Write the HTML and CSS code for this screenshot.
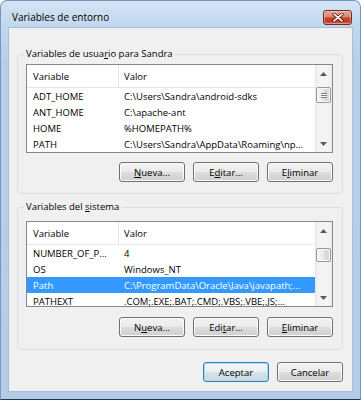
FILE: index.html
```html
<!DOCTYPE html>
<html lang="es">
<head>
<meta charset="utf-8">
<title>Variables de entorno</title>
<link rel="stylesheet" href="styles.css">
</head>
<body>
<div class="window">
  <div class="titlebar">
    <span class="title">Variables de entorno</span>
    <span class="close">
      <svg width="12" height="9" viewBox="0 0 12 9">
        <path d="M2 1.2 L10 7.8 M10 1.2 L2 7.8" stroke="#4a1810" stroke-width="3.2" stroke-linecap="round" fill="none"/>
        <path d="M2 1.2 L10 7.8 M10 1.2 L2 7.8" stroke="#ffffff" stroke-width="1.7" stroke-linecap="round" fill="none"/>
      </svg>
    </span>
  </div>
  <div class="client">
    <fieldset class="group group-user">
      <legend>Variables de usua<u>r</u>io para Sandra</legend>
      <div class="list list-user">
        <div class="list-main">
          <div class="row head"><span class="c1">Variable</span><span class="c2">Valor</span></div>
          <div class="row"><span class="c1">ADT_HOME</span><span class="c2">C:\Users\Sandra\android-sdks</span></div>
          <div class="row"><span class="c1">ANT_HOME</span><span class="c2">C:\apache-ant</span></div>
          <div class="row"><span class="c1">HOME</span><span class="c2">%HOMEPATH%</span></div>
          <div class="row"><span class="c1">PATH</span><span class="c2">C:\Users\Sandra\AppData\Roaming\np...</span></div>
        </div>
        <div class="vscroll">
          <div class="arrow"><svg width="7" height="4" viewBox="0 0 7 4"><path d="M0 4 L3.5 0 L7 4 Z" fill="#5a5a5a"/></svg></div>
          <div class="track"><div class="thumb thumb-user"><span class="grip"></span></div></div>
          <div class="arrow"><svg width="7" height="4" viewBox="0 0 7 4"><path d="M0 0 L7 0 L3.5 4 Z" fill="#5a5a5a"/></svg></div>
        </div>
      </div>
      <div class="btns">
        <button class="btn"><u>N</u>ueva...</button>
        <button class="btn">E<u>d</u>itar...</button>
        <button class="btn">E<u>l</u>iminar</button>
      </div>
    </fieldset>

    <fieldset class="group group-sys">
      <legend>Variables del <u>s</u>istema</legend>
      <div class="list list-sys">
        <div class="list-main">
          <div class="row head"><span class="c1">Variable</span><span class="c2">Valor</span></div>
          <div class="row"><span class="c1">NUMBER_OF_P...</span><span class="c2">4</span></div>
          <div class="row"><span class="c1">OS</span><span class="c2">Windows_NT</span></div>
          <div class="row selected"><span class="c1">Path</span><span class="c2">C:\ProgramData\Oracle\Java\javapath;...</span></div>
          <div class="row"><span class="c1">PATHEXT</span><span class="c2">.COM;.EXE;.BAT;.CMD;.VBS;.VBE;.JS;...</span></div>
        </div>
        <div class="vscroll">
          <div class="arrow"><svg width="7" height="4" viewBox="0 0 7 4"><path d="M0 4 L3.5 0 L7 4 Z" fill="#5a5a5a"/></svg></div>
          <div class="track"><div class="thumb thumb-sys"></div></div>
          <div class="arrow"><svg width="7" height="4" viewBox="0 0 7 4"><path d="M0 0 L7 0 L3.5 4 Z" fill="#5a5a5a"/></svg></div>
        </div>
      </div>
      <div class="btns">
        <button class="btn">N<u>u</u>eva...</button>
        <button class="btn">Edi<u>t</u>ar...</button>
        <button class="btn"><u>E</u>liminar</button>
      </div>
    </fieldset>

    <div class="dialog-btns">
      <button class="btn btn-default">Aceptar</button>
      <button class="btn">Cancelar</button>
    </div>
  </div>
</div>
</body>
</html>
```

FILE: styles.css
```css
* { box-sizing: border-box; }
html, body { margin: 0; padding: 0; background: #ffffff; }
body {
  font-family: "Open Sans", "Noto Sans", sans-serif;
  font-size: 9.5px;
  color: #000;
}
u { text-decoration: underline; text-underline-offset: 1px; }

.window {
  width: 361px;
  height: 400px;
  display: flex;
  flex-direction: column;
  border: 1px solid #7896ba;
  border-bottom-color: #22384f;
  border-radius: 7px 7px 0 0;
  background: linear-gradient(to bottom, #d4e4f5 0px, #c0d7ee 26px, #b7d0ea 60px, #b3cde9 100%);
}

.titlebar {
  height: 26px;
  flex: none;
  display: flex;
  align-items: center;
  justify-content: space-between;
  padding: 6px 8px 0 11px;
}
.title {
  font-size: 10px;
  color: #000;
}
.close {
  width: 29px;
  height: 15px;
  display: flex;
  align-items: center;
  justify-content: center;
  border: 1px solid #6e2a20;
  border-radius: 3px;
  background: linear-gradient(to bottom, #e8a797 0%, #db8572 45%, #c84831 52%, #bf3a24 80%, #d3634a 100%);
  box-shadow: inset 0 0 0 1px rgba(255, 220, 210, 0.45);
}

.client {
  flex: 1;
  margin: 0 7px 7px 7px;
  background: #f0f0f0;
  border: 1px solid #a8bfd8;
  padding: 19px 9px 0 8px;
  display: flex;
  flex-direction: column;
}

.group {
  margin: 0;
  border: 1px solid #d5dfe5;
  border-radius: 3px;
  padding: 3px 9px 11px 8px;
  min-width: 0;
}
.group legend {
  padding: 0 2px;
  margin-left: -2px;
  line-height: 14px;
  height: 14px;
}
.group-sys {
  margin-top: 6px;
  padding-top: 7px;
  padding-bottom: 12px;
}

.list {
  display: flex;
  background: #fff;
  border: 1px solid #828790;
  overflow: hidden;
}
.list-user { height: 89px; }
.list-sys { height: 86px; }

.list-main {
  flex: 1;
  min-width: 0;
  overflow: hidden;
}
.row {
  display: flex;
  height: 16px;
  align-items: center;
  white-space: nowrap;
}
.row .c1 {
  width: 92px;
  flex: none;
  padding-left: 6px;
  overflow: hidden;
}
.row .c2 {
  flex: 1;
  padding-left: 5px;
  overflow: hidden;
}
.row.head {
  height: 23px;
  border-bottom: 1px solid #e5e5e5;
  align-items: stretch;
}
.row.head span {
  display: flex;
  align-items: center;
}
.row.head .c1 { border-right: 1px solid #e5e5e5; }
.row.selected {
  background: #3399ff;
  color: #fff;
}

.vscroll {
  width: 17px;
  flex: none;
  display: flex;
  flex-direction: column;
  background: linear-gradient(to right, #e6e6e6 0px, #f3f3f3 3px, #f5f5f5 12px, #ececec 17px);
}
.arrow {
  height: 17px;
  flex: none;
  display: flex;
  align-items: center;
  justify-content: center;
}
.track {
  flex: 1;
  padding: 0 1px;
}
.thumb {
  border: 1px solid #979797;
  border-radius: 2px;
  background: linear-gradient(to right, #f4f4f4 0%, #ebebeb 50%, #dcdcdc 51%, #d6d6d6 100%);
  box-shadow: inset 0 0 0 1px #fafafa;
  display: flex;
  align-items: center;
  justify-content: center;
}
.thumb-user { margin-top: 5px; height: 16px; }
.thumb-sys { margin-top: 9px; height: 14px; }
.grip {
  width: 6px;
  height: 5px;
  background: repeating-linear-gradient(to bottom, #7c7c7c 0px, #7c7c7c 1px, #f8f8f8 1px, #f8f8f8 2px);
}

.btns {
  display: flex;
  justify-content: flex-end;
  gap: 8px;
  margin-top: 9px;
}
.group-sys .btns { margin-top: 10px; }

.btn {
  width: 66px;
  height: 20px;
  padding: 0;
  font-family: inherit;
  font-size: 9.5px;
  color: #000;
  border: 1px solid #707070;
  border-radius: 3px;
  background: linear-gradient(to bottom, #f2f2f2 0%, #ebebeb 50%, #dddddd 51%, #cfcfcf 100%);
  box-shadow: inset 0 0 0 1px #fcfcfc;
  display: flex;
  align-items: center;
  justify-content: center;
}
.btn-default {
  border-color: #3c7fb1;
  box-shadow: inset 0 0 0 1px #a3dcf7;
  background: linear-gradient(to bottom, #f2f6f9 0%, #e9eff3 50%, #d9e2e8 51%, #cdd8e0 100%);
}

.dialog-btns {
  display: flex;
  justify-content: flex-end;
  gap: 8px;
  margin-top: 12px;
}
```
